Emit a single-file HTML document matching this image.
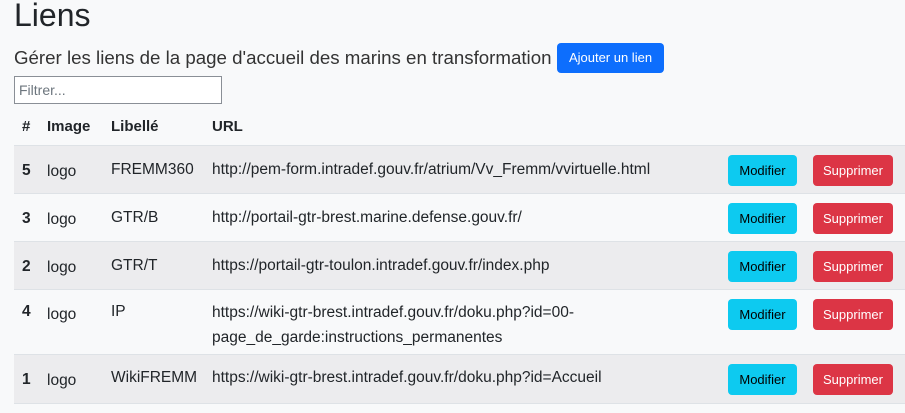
<!DOCTYPE html>
<html><head><meta charset="utf-8"><style>
body{margin:0;background:#f8f9fa;font-family:"Liberation Sans",sans-serif;color:#212529;width:905px;height:413px;overflow:hidden;position:relative}
.a{position:absolute;white-space:nowrap}
h1{position:absolute;left:14px;top:-3px;margin:0;font-weight:400;font-size:32px}
.sub{left:14px;top:47px;font-size:18.7px;color:#333}
.add{left:557px;top:43px;width:107px;height:30px;background:#0d6efd;color:#fff;border-radius:4px;font-size:13px;text-align:center;line-height:30px}
.inp{left:14px;top:76px;height:26px;border:1px solid #8a8f96;background:#fff;font-size:14px;color:#6c757d;line-height:26px;padding-left:4px;width:202px}
.th{top:118px;font-weight:700;font-size:15px}
.row{position:absolute;left:14px;width:891px;border-top:1px solid #dee2e6}
.row.s{background:#ececee}
.c{position:absolute;font-size:15.5px;white-space:nowrap;line-height:25px}
.b{font-weight:700}
.mod{position:absolute;left:714px;width:69px;height:31px;background:#0dcaf0;color:#000;border-radius:4px;font-size:13px;text-align:center;line-height:31px}
.sup{position:absolute;left:799px;width:80px;height:31px;background:#dc3545;color:#fff;border-radius:4px;font-size:13px;text-align:center;line-height:31px}
</style></head><body>
<h1>Liens</h1>
<div class="a sub">Gérer les liens de la page d'accueil des marins en transformation</div>
<div class="a add">Ajouter un lien</div>
<div class="a inp">Filtrer...</div>
<div class="a th" style="left:22px">#</div>
<div class="a th" style="left:47px">Image</div>
<div class="a th" style="left:111px">Libellé</div>
<div class="a th" style="left:212px">URL</div>

<div class="row s" style="top:145px;height:48px">
<div class="c b" style="left:8px;top:12px">5</div><div class="c" style="left:33px;top:13px">logo</div><div class="c" style="left:97px;top:11px">FREMM360</div><div class="c" style="left:198px;top:11px">http://pem-form.intradef.gouv.fr/atrium/Vv_Fremm/vvirtuelle.html</div>
<div class="mod" style="top:9px">Modifier</div><div class="sup" style="top:9px">Supprimer</div></div>

<div class="row" style="top:193px;height:48px">
<div class="c b" style="left:8px;top:12px">3</div><div class="c" style="left:33px;top:13px">logo</div><div class="c" style="left:97px;top:11px">GTR/B</div><div class="c" style="left:198px;top:11px">http://portail-gtr-brest.marine.defense.gouv.fr/</div>
<div class="mod" style="top:9px">Modifier</div><div class="sup" style="top:9px">Supprimer</div></div>

<div class="row s" style="top:241px;height:48px">
<div class="c b" style="left:8px;top:12px">2</div><div class="c" style="left:33px;top:13px">logo</div><div class="c" style="left:97px;top:11px">GTR/T</div><div class="c" style="left:198px;top:11px">https://portail-gtr-toulon.intradef.gouv.fr/index.php</div>
<div class="mod" style="top:9px">Modifier</div><div class="sup" style="top:9px">Supprimer</div></div>

<div class="row" style="top:289px;height:65px">
<div class="c b" style="left:8px;top:9px">4</div><div class="c" style="left:33px;top:12px">logo</div><div class="c" style="left:97px;top:9px">IP</div><div class="c" style="left:198px;top:10px">https://wiki-gtr-brest.intradef.gouv.fr/doku.php?id=00-<br>page_de_garde:instructions_permanentes</div>
<div class="mod" style="top:9px">Modifier</div><div class="sup" style="top:9px">Supprimer</div></div>

<div class="row s" style="top:354px;height:48px;border-bottom:1px solid #dee2e6">
<div class="c b" style="left:8px;top:12px">1</div><div class="c" style="left:33px;top:13px">logo</div><div class="c" style="left:97px;top:10px">WikiFREMM</div><div class="c" style="left:198px;top:10px">https://wiki-gtr-brest.intradef.gouv.fr/doku.php?id=Accueil</div>
<div class="mod" style="top:9px">Modifier</div><div class="sup" style="top:9px">Supprimer</div></div>
</body></html>
